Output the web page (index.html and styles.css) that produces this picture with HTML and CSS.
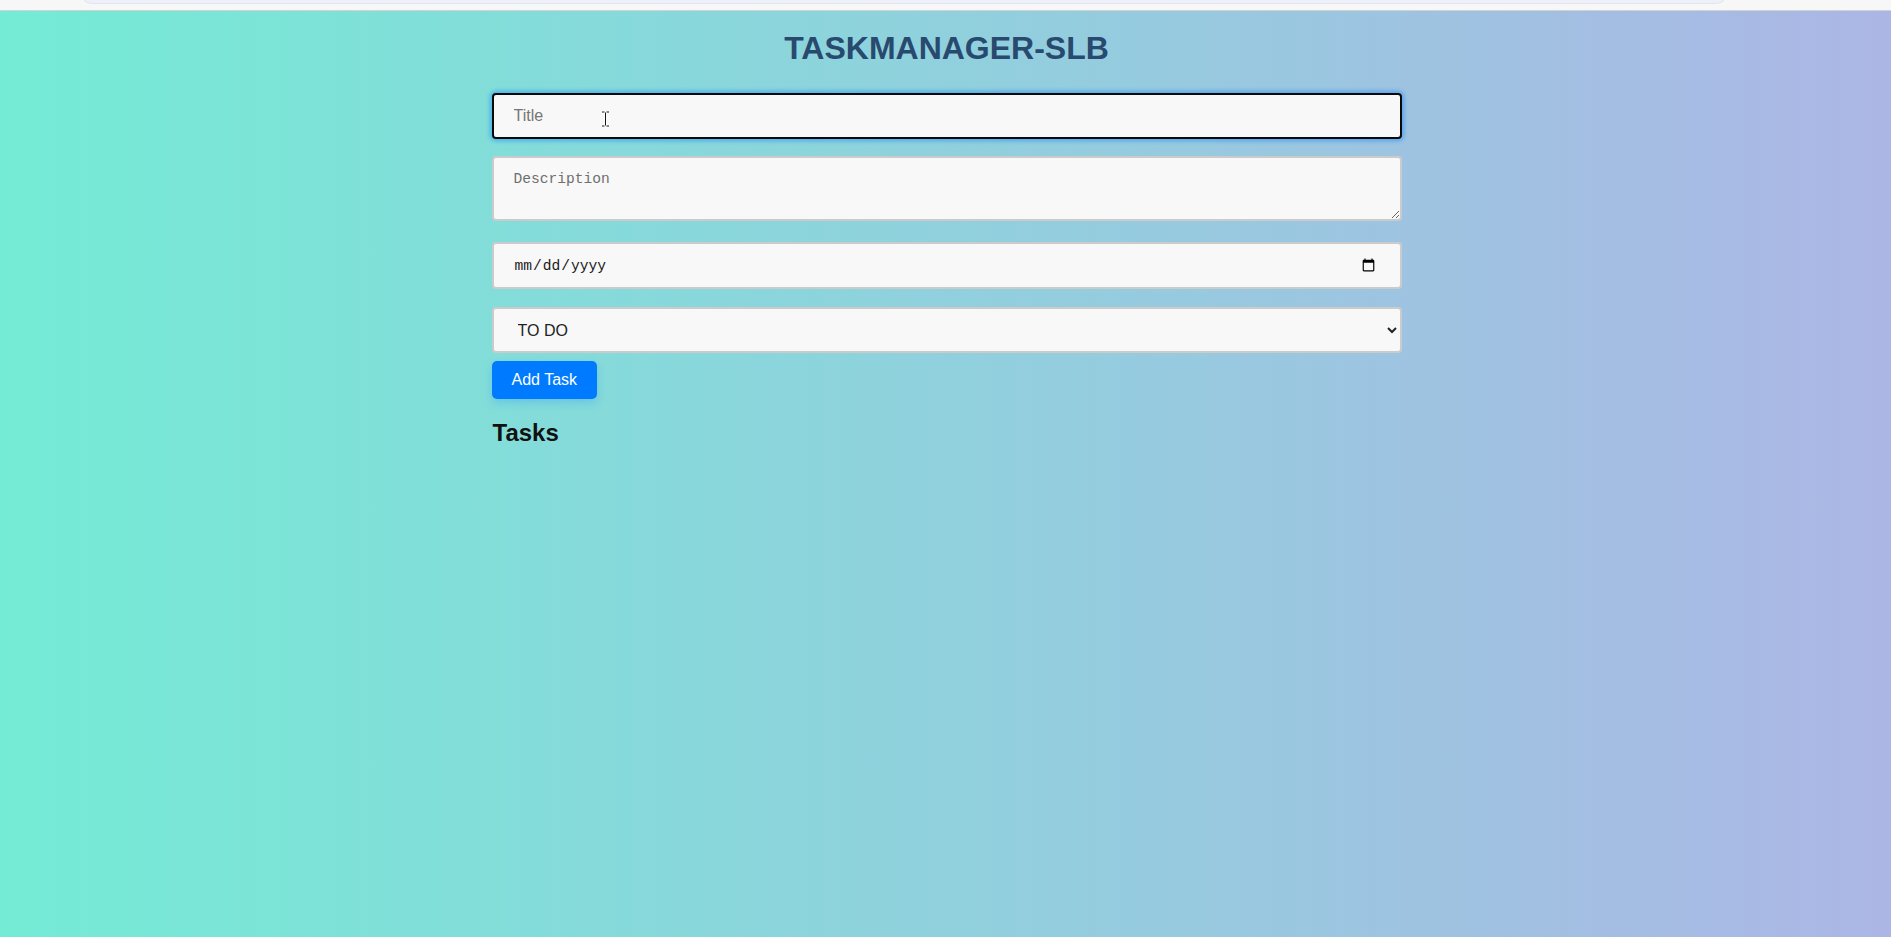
FILE: index.html
```html
<!DOCTYPE html>
<html lang="en">
<head>
<meta charset="utf-8">
<title>TaskManager-SLB</title>
<link rel="stylesheet" href="styles.css">
</head>
<body>
<div class="browser-bar"><div class="omnibox"></div></div>
<main class="page">
  <div class="container">
    <h1 class="app-title">TASKMANAGER-SLB</h1>
    <form class="task-form">
      <input class="field field-title is-focused" type="text" placeholder="Title">
      <textarea class="field field-desc" rows="2" placeholder="Description"></textarea>
      <input class="field field-date" type="date">
      <select class="field field-status">
        <option>TO DO</option>
        <option>IN PROGRESS</option>
        <option>DONE</option>
      </select>
      <div class="actions"><button type="button" class="btn-add">Add Task</button></div>
    </form>
    <h2 class="tasks-heading">Tasks</h2>
  </div>
  <svg class="ibeam" width="9" height="16" viewBox="0 0 9 16" aria-hidden="true">
    <path d="M1 1h2.5M5.5 1H8M4.5 1.5v13M1 15h2.5M5.5 15H8" stroke="#fff" stroke-width="3" fill="none"/>
    <path d="M1 1h2.5M5.5 1H8M4.5 1.5v13M1 15h2.5M5.5 15H8" stroke="#111" stroke-width="1" fill="none"/>
  </svg>
</main>
</body>
</html>
```
FILE: styles.css
```css
html, body {
  margin: 0;
  padding: 0;
}
body {
  font-family: "Liberation Sans", Arial, sans-serif;
  background: #f7f7f7;
}
.browser-bar {
  height: 10px;
  background: #f7f7f7;
  border-bottom: 1px solid #d2d2d2;
}
.omnibox {
  margin-left: 84px;
  width: 1638px;
  height: 3px;
  background: #edf0f9;
  border: 1px solid #e2e5f0;
  border-top: none;
  border-radius: 0 0 10px 10px / 0 0 4px 4px;
}
.page {
  position: relative;
  min-height: 926px;
  padding-left: 2px;
  background: linear-gradient(to right, #74ebd5, #acb6e5);
}
.container {
  width: 910px;
  margin: 0 auto;
  padding-top: 19px;
}
.app-title {
  margin: 0 0 26px;
  text-align: center;
  font-size: 32px;
  line-height: 37px;
  font-weight: 700;
  color: #284a6e;
}
.task-form {
  display: flex;
  flex-direction: column;
}
.field {
  box-sizing: border-box;
  width: 100%;
  margin: 0;
  padding: 12px 20px;
  border: 2px solid #cbcbcb;
  border-radius: 4px;
  background: #f8f8f8;
  font-family: "Liberation Sans", Arial, sans-serif;
  font-size: 16px;
  color: #222;
}
.field::placeholder {
  color: #757575;
}
.field-title {
  height: 46px;
  margin-bottom: 17px;
}
.field-title.is-focused {
  border-color: #0a0a0a;
  outline: none;
  box-shadow: 0 0 4px 2px rgba(0, 123, 255, 0.45);
}
.field-desc {
  height: 65px;
  margin-bottom: 21px;
  font-family: "Liberation Mono", "DejaVu Sans Mono", monospace;
  font-size: 14.6px;
  line-height: 18px;
  resize: vertical;
}
.field-desc::placeholder {
  color: #6f6f6f;
}
.field-date {
  height: 47px;
  margin-bottom: 18px;
  padding-left: 20px;
  padding-right: 22px;
  font-family: "Liberation Mono", "DejaVu Sans Mono", monospace;
  font-size: 14.6px;
  color: #1a1a1a;
}
.field-status {
  height: 46px;
  margin-bottom: 8px;
  padding: 0 10px 0 20px;
  color: #222;
}
.actions {
  display: flex;
}
.btn-add {
  height: 38px;
  padding: 0 20px;
  border: none;
  border-radius: 5px;
  background: #007bff;
  color: #fff;
  font-family: "Liberation Sans", Arial, sans-serif;
  font-size: 16px;
  box-shadow: 0 4px 10px rgba(0, 123, 255, 0.22);
  cursor: pointer;
}
.tasks-heading {
  margin: 20px 0 0 1px;
  font-size: 24px;
  line-height: 28px;
  font-weight: 700;
  color: #111;
}
.ibeam {
  position: absolute;
  left: 601px;
  top: 100px;
}
```
